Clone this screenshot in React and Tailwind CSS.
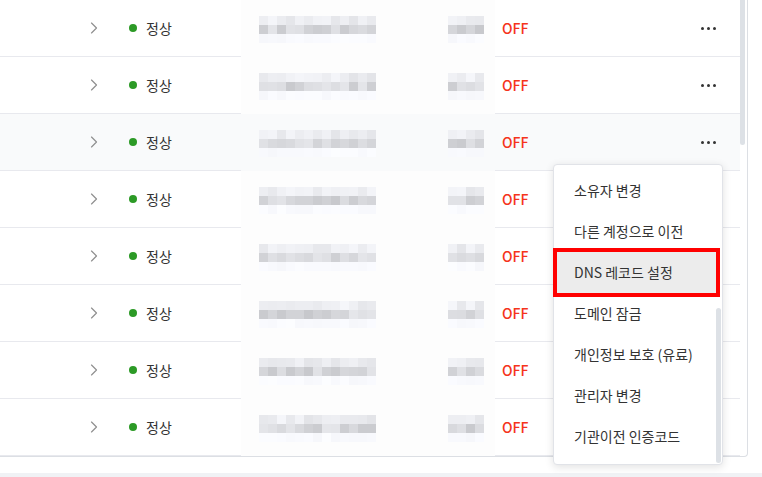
import { ChevronRight } from 'lucide-react'

const font = { fontFamily: '"Noto Sans CJK KR", "Noto Sans", sans-serif' }

const MENU = [
  '소유자 변경',
  '다른 계정으로 이전',
  'DNS 레코드 설정',
  '도메인 잠금',
  '개인정보 보호 (유료)',
  '관리자 변경',
  '기관이전 인증코드',
]

// deterministic grey shades for the blurred (pixelated) cells
function shade(seed) {
  const x = Math.sin(seed * 12.9898) * 43758.5453
  return x - Math.floor(x)
}

function Pixels({ row, cols, base }) {
  return (
    <div className="flex flex-col">
      {[0, 1, 2].map((r) => (
        <div key={r} className="flex">
          {Array.from({ length: cols }).map((_, c) => {
            const v = shade(row * 97 + r * 31 + c * 7 + base)
            const lo = r === 0 ? 228 : r === 1 ? 200 : 247
            const span = r === 0 ? 18 : r === 1 ? 30 : 6
            const g = Math.round(lo + v * span)
            return (
              <div
                key={c}
                className="h-[9px] w-[9px]"
                style={{ backgroundColor: `rgb(${g - 1},${g},${g + 4})` }}
              />
            )
          })}
        </div>
      ))}
    </div>
  )
}

function Row({ i }) {
  const hover = i === 2
  return (
    <div className={`flex h-[57px] ${hover ? 'bg-[#f9fafb]' : 'bg-white'}`}>
      <div className="flex w-[241px] items-center border-b border-[#e8e9ee] pl-[84px]">
        <ChevronRight size={20} strokeWidth={1.4} className="text-[#8f8f8f]" />
        <span className="ml-[25px] h-[8px] w-[8px] rounded-full bg-[#2c9a26]" />
        <span className="ml-[9px] text-[14px] text-[#333]">정상</span>
      </div>
      <div
        className={`flex w-[254px] items-start pt-[16px] ${hover ? 'bg-[#f9fafb]' : 'bg-[#fdfdfd]'}`}
      >
        <div className="ml-[18px]">
          <Pixels row={i} cols={13} base={3} />
        </div>
        <div className="ml-[72px]">
          <Pixels row={i} cols={4} base={11} />
        </div>
      </div>
      <div className="flex flex-1 items-center justify-between border-b border-[#e8e9ee] pl-[7px] pr-[24px]">
        <span className="text-[14px] font-medium text-[#f5341c]">OFF</span>
        <span className="flex gap-[3px]">
          <span className="h-[3px] w-[3px] rounded-full bg-[#333]" />
          <span className="h-[3px] w-[3px] rounded-full bg-[#333]" />
          <span className="h-[3px] w-[3px] rounded-full bg-[#333]" />
        </span>
      </div>
    </div>
  )
}

export default function App() {
  return (
    <div className="relative h-[477px] w-[762px] overflow-hidden bg-white" style={font}>
      <div className="w-[748px] rounded-br-[4px] border-b border-r border-[#dcdfe4]">
        <div className="flex h-[456px]">
          <div className="w-[740px]">
            {Array.from({ length: 8 }).map((_, i) => (
              <Row key={i} i={i} />
            ))}
          </div>
          <div className="w-[5px]">
            <div className="h-[145px] w-[5px] rounded-b-[3px] bg-[#dde1e6]" />
          </div>
        </div>
      </div>
      <div className="mt-[16px] h-[4px] bg-[#f0f2f5]" />

      <div className="absolute left-[553px] top-[164px] h-[301px] w-[170px] rounded-[4px] border border-[#e1e3e8] bg-white pt-[5px] shadow-[0_2px_8px_rgba(0,0,0,0.12)]">
        {MENU.map((m, i) => (
          <div
            key={m}
            className={`flex h-[41px] items-center text-[14px] text-[#333] ${
              i === 2
                ? 'mx-[3px] w-[159px] bg-[#ececec] pl-[17px] outline outline-[4px] outline-[#ff0000]'
                : 'pl-[20px]'
            }`}
          >
            {m}
          </div>
        ))}
        <div className="absolute left-[162px] top-[143px] h-[155px] w-[5px] rounded-full bg-[#dde1e6]" />
      </div>
    </div>
  )
}
